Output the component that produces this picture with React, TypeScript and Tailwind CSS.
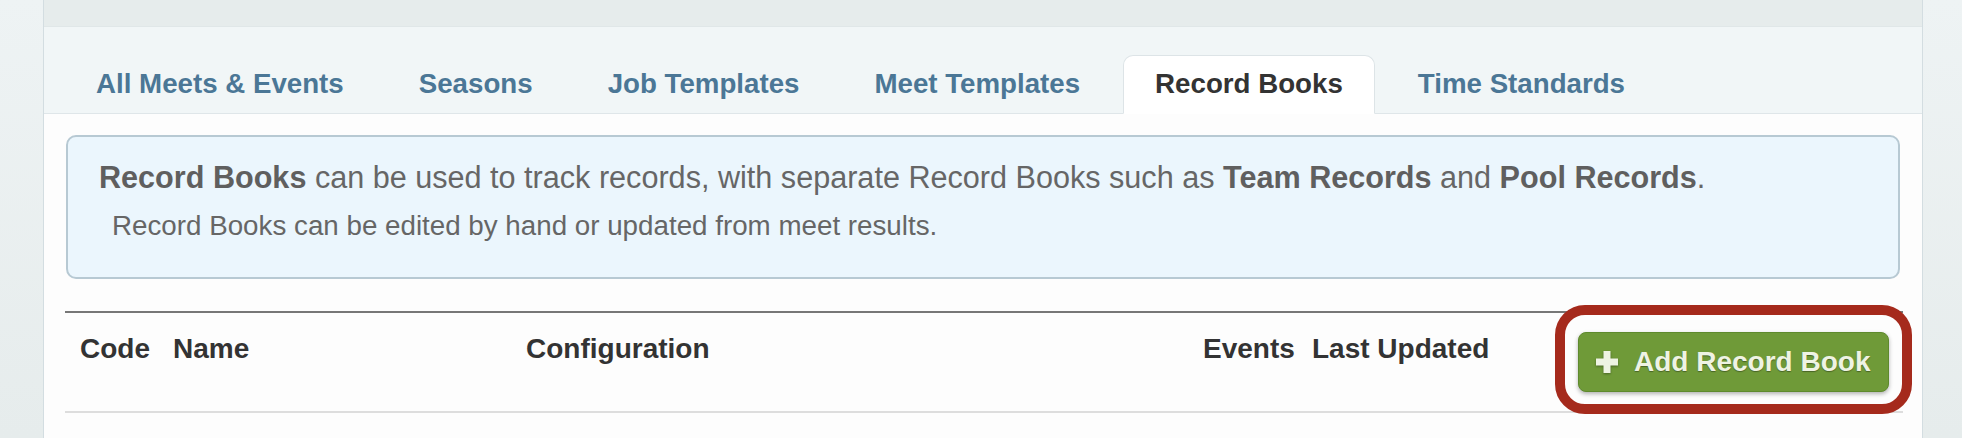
import React from "react";

// ─── Palette ──────────────────────────────────────────────────────────────────

const TABS = [
  "All Meets & Events",
  "Seasons",
  "Job Templates",
  "Meet Templates",
  "Record Books",
  "Time Standards",
];

const ACTIVE = "Record Books";

function PlusIcon() {
  return (
    <svg width="22" height="22" viewBox="0 0 22 22" className="shrink-0 drop-shadow-[0_1px_1px_rgba(0,0,0,0.35)]">
      <path d="M11 0v22M0 11h22" stroke="#eef3e3" strokeWidth="7" />
    </svg>
  );
}

function Tabs() {
  return (
    <div className="flex h-[87px] items-end gap-[11px] border-b border-[#dfe6e9] bg-[#f1f6f7] pl-[20px]">
      {TABS.map((t) => {
        const active = t === ACTIVE;
        return (
          <div
            key={t}
            className={
              active
                ? "-mb-px rounded-t-[10px] border border-[#dde4e7] border-b-white bg-white px-[31px] pb-[9px] pt-[8px] text-[27.7px] font-bold leading-[40px] text-[#333333]"
                : "-mb-px rounded-t-[10px] border border-transparent px-[31px] pb-[9px] pt-[8px] text-[27.7px] font-bold leading-[40px] text-[#4b7796]"
            }
          >
            {t}
          </div>
        );
      })}
    </div>
  );
}

function InfoBox() {
  return (
    <div className="mx-[22px] mt-[21px] rounded-[10px] border-2 border-[#b7c9d3] bg-[#ebf6fd] pb-[31px] pl-[31px] pt-[19px] text-[#666666]">
      <p className="text-[30.6px] leading-[42px]">
        <b className="text-[#5f5f5f]">Record Books</b> can be used to track records, with separate Record Books such
        as <b className="text-[#5f5f5f]">Team Records</b> and <b className="text-[#5f5f5f]">Pool Records</b>.
      </p>
      <p className="ml-[13px] mt-[8px] text-[27.75px] leading-[40px]">
        Record Books can be edited by hand or updated from meet results.
      </p>
    </div>
  );
}

function RecordTable() {
  const th = "pl-[15px] pt-[16px] text-[28px] font-bold leading-[40px] text-[#333333]";
  return (
    <div className="ml-[21px] mr-[19px] mt-[32px] border-b-2 border-t-2 border-b-[#dddddd] border-t-[#777777]">
      <div className="flex h-[98px]">
        <div className={`${th} w-[93px]`}>Code</div>
        <div className={`${th} w-[353px]`}>Name</div>
        <div className={`${th} w-[677px]`}>Configuration</div>
        <div className={`${th} w-[109px]`}>Events</div>
        <div className={`${th} flex-1`}>Last Updated</div>
        <div className="pr-[14px] pt-[19px]">
          <div className="relative">
            <div className="pointer-events-none absolute -bottom-[22px] -left-[23px] -right-[23px] -top-[27px] rounded-[30px] border-[10px] border-[#a52a1c]" />
            <button className="relative flex h-[60px] w-[311px] items-center gap-[16px] rounded-[8px] border border-[#5e8a2d] bg-[#6f9a38] pl-[17px] text-[28px] font-bold text-[#eef3e3] shadow-[0_2px_4px_rgba(0,0,0,0.3)] [text-shadow:0_1px_1px_rgba(0,0,0,0.35)]">
              <PlusIcon />
              <span>Add Record Book</span>
            </button>
          </div>
        </div>
      </div>
    </div>
  );
}

export default function App() {
  return (
    <div className="flex h-[438px] w-full overflow-hidden bg-[#e8eeef] font-['Liberation_Sans',Arial,sans-serif]">
      <aside className="w-[44px] shrink-0 border-r border-[#d3dde1] bg-gradient-to-b from-[#eef3f4] to-[#e6ecec]" />
      <main className="flex min-w-0 flex-1 flex-col bg-[#fdfdfd]">
        <div className="h-[27px] shrink-0 border-b border-[#e0e7e8] bg-[#e6ecec]" />
        <Tabs />
        <InfoBox />
        <RecordTable />
      </main>
      <aside className="w-[40px] shrink-0 border-l border-[#d3dde1] bg-gradient-to-b from-[#eef3f4] to-[#e6ecec]" />
    </div>
  );
}
